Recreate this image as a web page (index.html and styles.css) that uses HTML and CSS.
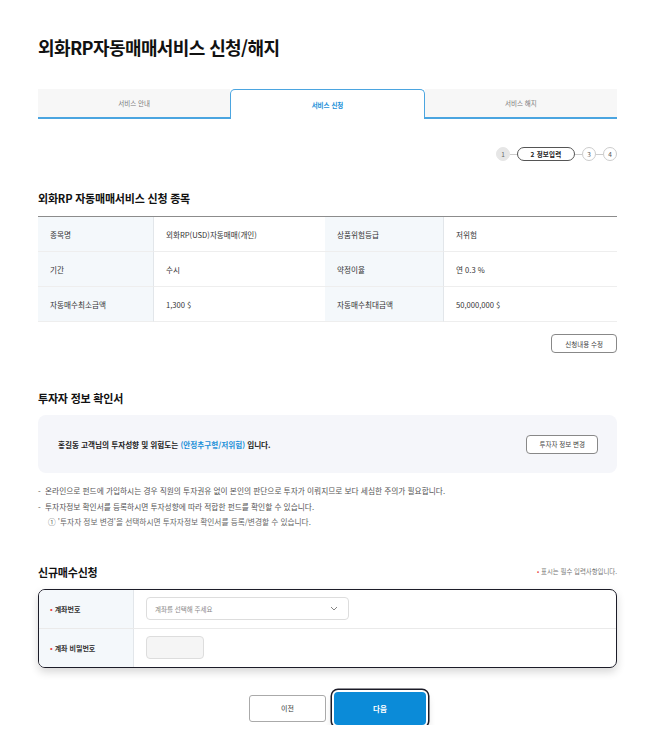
FILE: index.html
```html
<!DOCTYPE html>
<html lang="ko">
<head>
    <meta charset="UTF-8">
    <meta name="viewport" content="width=device-width, initial-scale=1.0">
    <title>외화RP자동매매서비스 신청/해지</title>
    <link rel="stylesheet" href="styles.css">
</head>
<body>
    <div class="container">
        <h1 class="page-title">외화RP자동매매서비스 신청/해지</h1>

        <div class="tabs">
            <div class="tab">서비스 안내</div>
            <div class="tab active">서비스 신청</div>
            <div class="tab">서비스 해지</div>
        </div>

        <div class="steps">
            <span class="step done">1</span>
            <span class="step-line"></span>
            <span class="step current">2 정보입력</span>
            <span class="step-line"></span>
            <span class="step">3</span>
            <span class="step-line"></span>
            <span class="step">4</span>
        </div>

        <h2 class="section-title first">외화RP 자동매매서비스 신청 종목</h2>
        <div class="info-table">
            <div class="th">종목명</div>
            <div class="td">외화RP(USD)자동매매(개인)</div>
            <div class="th">상품위험등급</div>
            <div class="td">저위험</div>

            <div class="th">기간</div>
            <div class="td">수시</div>
            <div class="th">약정이율</div>
            <div class="td">연 0.3 %</div>

            <div class="th">자동매수최소금액</div>
            <div class="td">1,300 $</div>
            <div class="th">자동매수최대금액</div>
            <div class="td">50,000,000 $</div>
        </div>
        <div class="btn-row">
            <button class="btn-line">신청내용 수정</button>
        </div>

        <h2 class="section-title">투자자 정보 확인서</h2>
        <div class="invest-box">
            <p>홍길동 고객님의 투자성향 및 위험도는 <span class="hl">(안정추구형/저위험)</span> 입니다.</p>
            <button class="btn-line">투자자 정보 변경</button>
        </div>
        <ul class="notes">
            <li>온라인으로 펀드에 가입하시는 경우 직원의 투자권유 없이 본인의 판단으로 투자가 이뤄지므로 보다 세심한 주의가 필요합니다.</li>
            <li>투자자정보 확인서를 등록하시면 투자성향에 따라 적합한 펀드를 확인할 수 있습니다.</li>
            <li class="sub">&#9312; '투자자 정보 변경'을 선택하시면 투자자정보 확인서를 등록/변경할 수 있습니다.</li>
        </ul>

        <div class="title-row">
            <h2 class="section-title">신규매수신청</h2>
            <span class="req-note"><em>•</em> 표시는 필수 입력사항입니다.</span>
        </div>
        <div class="form-box">
            <div class="form-row">
                <div class="form-label"><em>•</em> 계좌번호</div>
                <div class="form-field">
                    <div class="select">
                        <span>계좌를 선택해 주세요</span>
                        <svg width="8" height="5" viewBox="0 0 8 5"><path d="M1 1l3 3 3-3" fill="none" stroke="#666" stroke-width="0.8"/></svg>
                    </div>
                </div>
            </div>
            <div class="form-row">
                <div class="form-label"><em>•</em> 계좌 비밀번호</div>
                <div class="form-field">
                    <div class="pw-input"></div>
                </div>
            </div>
        </div>

        <div class="actions">
            <button class="btn-prev">이전</button>
            <button class="btn-next">다음</button>
        </div>
    </div>
</body>
</html>
```

FILE: styles.css
```css
body {
    font-family: "Noto Sans CJK KR", "Noto Sans", sans-serif;
    margin: 0;
    padding: 0;
    color: #222;
    background: #fff;
}

.container {
    width: 579px;
    margin: 0 0 0 38px;
}

.page-title {
    margin: 36px 0 0;
    font-size: 18px;
    line-height: 22px;
    font-weight: 700;
    letter-spacing: -0.6px;
    color: #111;
}

.tabs {
    display: flex;
    margin-top: 31px;
    height: 30px;
}

.tab {
    flex: 1;
    display: flex;
    align-items: center;
    justify-content: center;
    background: #f7f7f7;
    border-bottom: 2px solid #4ba5e0;
    font-size: 6.5px;
    color: #777;
}

.tab.active {
    background: #fff;
    border: 1.5px solid #4ba5e0;
    border-bottom: none;
    border-radius: 5px 5px 0 0;
    color: #1a8fd8;
    font-weight: 700;
}

.steps {
    display: flex;
    justify-content: flex-end;
    align-items: center;
    margin-top: 28px;
    height: 14px;
}

.step {
    box-sizing: border-box;
    height: 14px;
    min-width: 14px;
    border: 1px solid #ccc;
    border-radius: 7px;
    display: flex;
    align-items: center;
    justify-content: center;
    font-size: 6.5px;
    color: #555;
    background: #fff;
}

.step.done {
    background: #e6e6e6;
    border-color: #e6e6e6;
    color: #666;
}

.step.current {
    width: 58px;
    border-color: #555;
    color: #222;
    font-weight: 700;
    letter-spacing: 0.2px;
}

.step-line {
    width: 7px;
    height: 1px;
    background: #ccc;
}

.section-title {
    margin: 38px 0 0;
    font-size: 11px;
    line-height: 14px;
    font-weight: 700;
    letter-spacing: -0.2px;
    color: #111;
}

.section-title.first {
    margin-top: 30px;
}

.info-table {
    display: grid;
    grid-template-columns: 116px 171px 119px 1fr;
    margin-top: 11px;
    border-top: 1px solid #8c8c8c;
}

.th,
.td {
    height: 35px;
    display: flex;
    align-items: center;
    padding-left: 12px;
    font-size: 7.6px;
    color: #333;
    border-bottom: 1px solid #eee;
    box-sizing: border-box;
}

.th {
    background: #f4f8fb;
    border-right: 1px solid #e2e6ea;
}

.btn-row {
    display: flex;
    justify-content: flex-end;
    margin-top: 12px;
}

.btn-line {
    height: 19px;
    padding: 0 13px;
    border: 1px solid #888;
    border-radius: 4px;
    background: #fff;
    font-family: inherit;
    font-size: 6.5px;
    color: #444;
}

.invest-box {
    margin-top: 10px;
    height: 58px;
    background: #f5f6fa;
    border-radius: 8px;
    display: flex;
    align-items: center;
    justify-content: space-between;
    padding: 0 19px 0 20px;
    box-sizing: border-box;
}

.invest-box p {
    margin: 0;
    font-size: 7.6px;
    font-weight: 700;
    color: #222;
}

.invest-box .hl {
    color: #1a8fd8;
}

.invest-box .btn-line {
    padding: 0 12px;
}

.notes {
    list-style: none;
    margin: 10px 0 0;
    padding: 0;
}

.notes li {
    font-size: 7.7px;
    line-height: 15.5px;
    color: #555;
    padding-left: 7px;
    position: relative;
}

.notes li::before {
    content: "-";
    position: absolute;
    left: 0;
}

.notes li.sub {
    padding-left: 10px;
    color: #666;
}

.notes li.sub::before {
    content: "";
}

.title-row {
    display: flex;
    justify-content: space-between;
    align-items: center;
    margin-top: 35px;
}

.title-row .section-title {
    margin: 0;
}

.req-note {
    font-size: 6.4px;
    color: #777;
}

em {
    font-style: normal;
    color: #e8413c;
}

.form-box {
    margin-top: 10px;
    border: 1px solid #1c1c28;
    border-radius: 7px;
    overflow: hidden;
    box-shadow: 0 4px 9px rgba(0, 0, 0, 0.16);
}

.form-row {
    display: flex;
    height: 38px;
}

.form-row + .form-row {
    border-top: 1px solid #eaeaea;
}

.form-label {
    width: 95px;
    background: #f4f8fb;
    border-right: 1px solid #e2e6ea;
    display: flex;
    align-items: center;
    padding-left: 11px;
    box-sizing: border-box;
    font-size: 7px;
    font-weight: 700;
    color: #333;
}

.form-label em {
    margin-right: 2px;
}

.form-field {
    flex: 1;
    display: flex;
    align-items: center;
    padding-left: 12px;
}

.select {
    width: 203px;
    height: 23px;
    box-sizing: border-box;
    border: 1px solid #ddd;
    border-radius: 4px;
    display: flex;
    align-items: center;
    justify-content: space-between;
    padding: 0 10px 0 8px;
    font-size: 6.5px;
    color: #888;
}

.pw-input {
    width: 58px;
    height: 23px;
    box-sizing: border-box;
    border: 1px solid #ddd;
    border-radius: 4px;
    background: #f5f5f5;
}

.actions {
    display: flex;
    justify-content: center;
    align-items: center;
    gap: 8px;
    margin-top: 24px;
    padding-left: 20px;
}

.btn-prev {
    width: 77px;
    height: 27px;
    border: 1px solid #aaa;
    border-radius: 3px;
    background: #fff;
    font-family: inherit;
    font-size: 7px;
    color: #333;
}

.btn-next {
    width: 92px;
    height: 33px;
    border: none;
    border-radius: 4px;
    background: #0b8bd8;
    box-shadow: 0 0 0 2px #fff, 0 0 0 3.5px #1c1c28, 0 6px 10px rgba(0, 0, 0, 0.22);
    font-family: inherit;
    font-size: 7.5px;
    font-weight: 700;
    color: #fff;
}
```
